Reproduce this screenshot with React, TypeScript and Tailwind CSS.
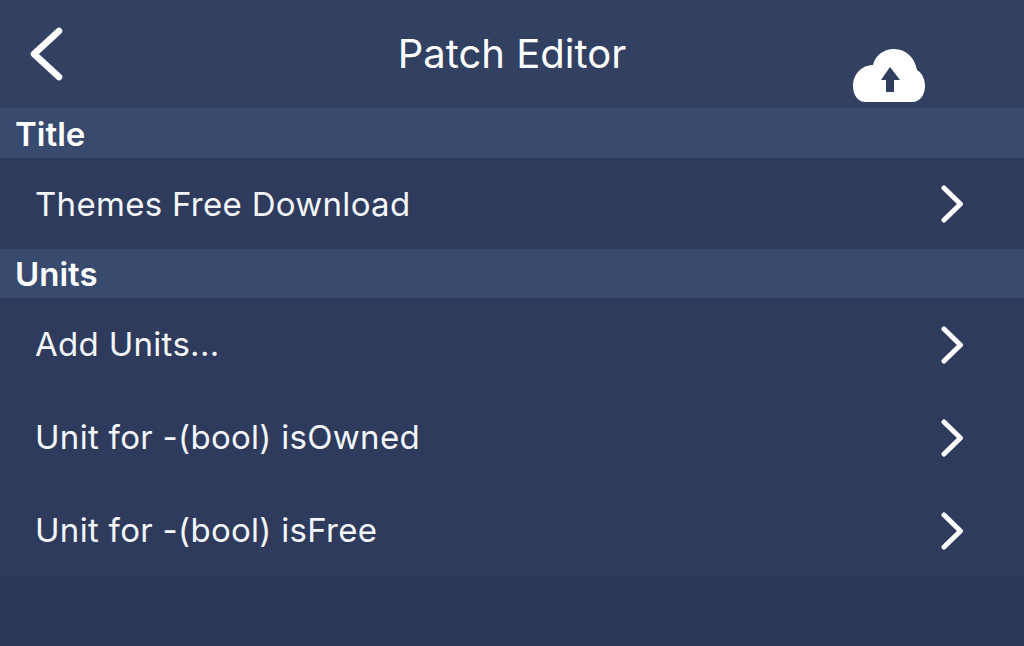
function Chevron() {
  return (
    <svg width="24" height="38" viewBox="0 0 24 38" fill="none" stroke="#fff" strokeWidth="5" strokeLinecap="round" strokeLinejoin="round">
      <path d="M4 3 L20.500 19 L4 35" />
    </svg>
  );
}

function Section({ title, cls }: { title: string; cls: string }) {
  return (
    <div className={`${cls} bg-[#394a6f] pl-[15px] flex items-center text-[33px] font-semibold text-white`}>
      {title}
    </div>
  );
}

function Row({ label, h, textCls = "" }: { label: string; h: string; textCls?: string }) {
  return (
    <div className={`${h} flex items-center justify-between pl-[35px] pr-[60px] text-[33px] tracking-[0.3px] text-[#f4f6fa]`}>
      <span className={textCls}>{label}</span>
      <Chevron />
    </div>
  );
}

export default function App() {
  return (
    <div className="font-['Inter','Liberation_Sans',sans-serif] w-[1024px] h-[646px] overflow-hidden bg-[#2c3859] flex flex-col">
      <header className="h-[108px] bg-[#324162] relative flex items-center justify-center">
        <span className="text-[40px] text-white">Patch Editor</span>
        <svg className="absolute left-[28px] top-[26px]" width="38" height="56" viewBox="0 0 38 56" fill="none" stroke="#fff" strokeWidth="6.500" strokeLinecap="round" strokeLinejoin="round">
          <path d="M31 5 L6 28 L31 51" />
        </svg>
        <svg className="absolute left-[852px] top-[48px]" width="74" height="55" viewBox="0 0 74 55">
          <path fill="#fff" d="M14 54 C5 54 1 46 1 38 C1 26 10 17 21 17 C23 8 31 1 42 1 C54 1 63 10 65 22 C70 25 73 31 73 38 C73 47 68 54 60 54 Z" />
          <path fill="#2f3d5f" d="M38 19 L48 32 L42 32 L42 44 L34 44 L34 32 L29 32 Z" />
        </svg>
      </header>
      <Section title="Title" cls="h-[50px] pt-[4px]" />
      <div className="bg-[#2e3b5d]">
        <Row label="Themes Free Download" h="h-[91px]" textCls="mt-[2px]" />
      </div>
      <Section title="Units" cls="h-[49px] pt-[2px]" />
      <div className="bg-[#2e3b5d]">
        <Row label="Add Units..." h="h-[93px]" />
        <Row label="Unit for -(bool) isOwned" h="h-[93px]" />
        <Row label="Unit for -(bool) isFree" h="h-[93px]" />
      </div>
    </div>
  );
}
